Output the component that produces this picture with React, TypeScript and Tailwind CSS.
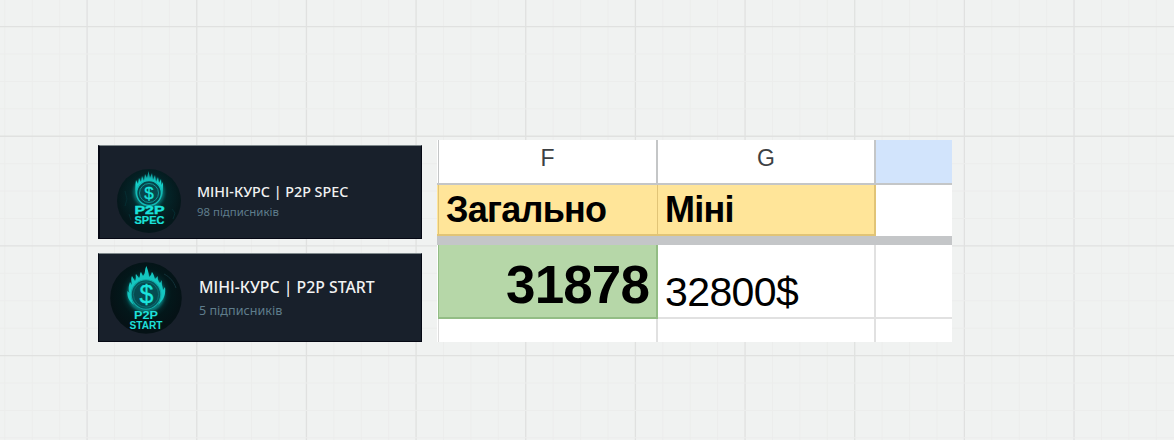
import React from "react";

const GRID_STEP = 109.66;

// faint canvas grid, every fourth line is stronger
function BoardGrid() {
  const columns = Array.from({ length: 45 }, (_, i) => i - 4);
  const rows = Array.from({ length: 18 }, (_, i) => i - 1);

  return (
    <svg className="absolute inset-0 h-full w-full" width="1174" height="440">
      {columns.map((i) => (
        <line
          key={`c${i}`}
          x1={87.1 + (i * GRID_STEP) / 4}
          x2={87.1 + (i * GRID_STEP) / 4}
          y1="0"
          y2="440"
          stroke={i % 4 === 0 ? "#e0e1e0" : "#ecedec"}
          strokeWidth={i % 4 === 0 ? 1.3 : 1}
        />
      ))}
      {rows.map((i) => (
        <line
          key={`r${i}`}
          x1="0"
          x2="1174"
          y1={26.6 + (i * GRID_STEP) / 4}
          y2={26.6 + (i * GRID_STEP) / 4}
          stroke={i % 4 === 0 ? "#e0e1e0" : "#ecedec"}
          strokeWidth={i % 4 === 0 ? 1.3 : 1}
        />
      ))}
    </svg>
  );
}

function SpecLogo() {
  return (
    <svg className="h-16 w-16 shrink-0" viewBox="0 0 64 64">
      <defs>
        <radialGradient id="specBg" cx="50%" cy="42%">
          <stop offset="0%" stopColor="#07595b" />
          <stop offset="55%" stopColor="#042529" />
          <stop offset="100%" stopColor="#05171b" />
        </radialGradient>
        <linearGradient id="specFire" x1="0" y1="0" x2="0" y2="1">
          <stop offset="0%" stopColor="#0b8284" />
          <stop offset="45%" stopColor="#16d6cf" />
          <stop offset="100%" stopColor="#0fa6a4" />
        </linearGradient>
        <filter id="specGlow" x="-30%" y="-30%" width="160%" height="160%">
          <feGaussianBlur stdDeviation="1.6" />
        </filter>
      </defs>
      <circle cx="32" cy="32" r="32" fill="url(#specBg)" />
      <path d="M8 22L10 30L8 37M55 40L58 44L56 50M12 45L14 51" fill="none" stroke="#062c31" strokeWidth="1" />
      <circle cx="32" cy="23" r="14" fill="none" stroke="#0fb5b0" strokeWidth="3" opacity="0.5" filter="url(#specGlow)" />
      <path
        d="M19 28C18 23 18 17 19 11L21 15L22 9L24 13L25 7L27 12L28 5L30 9L31.500 2L33 9L35 4L36 11L38 6L39 13L41 8L42 14L44 10L44.500 16L46 13C46 19 46 24 45 28C44 17 39 13 32 13C25 13 20 18 19 28Z"
        fill="url(#specFire)"
      />
      <circle cx="32" cy="24" r="12.400" fill="#054349" stroke="#13bcb7" strokeWidth="1.5" />
      <circle cx="32" cy="24" r="9.500" fill="#07474d" stroke="#109594" strokeWidth="1" />
      <text x="32" y="30" textAnchor="middle" fontFamily="Liberation Sans, sans-serif" fontSize="17" fill="#1be3dc" stroke="#1be3dc" strokeWidth="0.3">$</text>
      <text x="17.500" y="45" textLength="30" lengthAdjust="spacingAndGlyphs" fontFamily="Liberation Sans, sans-serif" fontWeight="700" fontSize="11.500" fill="#1be3dc" stroke="#1be3dc" strokeWidth="0.4">P2P</text>
      <text x="17.500" y="54.800" textLength="30" lengthAdjust="spacingAndGlyphs" fontFamily="Liberation Sans, sans-serif" fontWeight="700" fontSize="10.500" fill="#1be3dc" stroke="#1be3dc" strokeWidth="0.2">SPEC</text>
    </svg>
  );
}

function StartLogo() {
  return (
    <svg className="h-[72px] w-[72px] shrink-0" viewBox="0 0 72 72">
      <defs>
        <radialGradient id="startBg" cx="50%" cy="44%">
          <stop offset="0%" stopColor="#087477" />
          <stop offset="45%" stopColor="#043235" />
          <stop offset="70%" stopColor="#03171a" />
          <stop offset="100%" stopColor="#051216" />
        </radialGradient>
        <filter id="startGlow" x="-30%" y="-30%" width="160%" height="160%">
          <feGaussianBlur stdDeviation="1.8" />
        </filter>
      </defs>
      <circle cx="36" cy="36" r="35.800" fill="url(#startBg)" />
      <path d="M54 12C60 15 64 20 66 26" fill="none" stroke="#123138" strokeWidth="1" />
      <circle cx="36" cy="32" r="16.500" fill="none" stroke="#11bab5" strokeWidth="4" opacity="0.6" filter="url(#startGlow)" />
      <path
        d="M24 43C18 38 17 34 17.500 29L19.500 31C18 26 19 23 20 20L22 23C21 18 21 16 22 14L25 19C27 16 25 14 26 12L29 16C31 14 29 12 31 10L33 14C36 11 34 8 36.500 4C38 9 39 11 39 15C42 13 41 11 42 10C44 12 44 15 45 17L48 14C47 17 49 20 50 21L52 18C51 22 53 25 53 28L55 25C56 32 54 38 48 43C54 31 49 18 36 18C23 18 18 31 24 43Z"
        fill="#14c6c0"
      />
      <circle cx="36" cy="32.500" r="14.800" fill="#06565b" stroke="#12aaa7" strokeWidth="1.1" />
      <circle cx="36" cy="32.500" r="12.600" fill="#064b51" stroke="#0c7678" strokeWidth="0.8" />
      <text x="36.500" y="40.700" textAnchor="middle" fontFamily="Liberation Sans, sans-serif" fontSize="25" fill="#1be3dc" stroke="#1be3dc" strokeWidth="0.3">$</text>
      <text x="24" y="57.300" textLength="24" lengthAdjust="spacingAndGlyphs" fontFamily="Liberation Sans, sans-serif" fontWeight="700" fontSize="11.500" fill="#1fe0da">P2P</text>
      <text x="19.500" y="66.600" textLength="33" lengthAdjust="spacingAndGlyphs" fontFamily="Liberation Sans, sans-serif" fontWeight="700" fontSize="10" fill="#1fe0da">START</text>
    </svg>
  );
}

function Sheet() {
  return (
    <div className="grid h-[202px] w-[515px] grid-cols-[2px_219px_218px_76px] grid-rows-[45px_51px_9px_74px_23px] bg-white font-['Liberation_Sans',Arial,sans-serif] text-black">
      <div className="border-b-2 border-r border-[#c4c6c7]" />
      <div className="flex justify-center border-b-2 border-r-2 border-[#c4c6c7] pt-[5px] text-[23px] leading-[26px] text-[#3c4043]">F</div>
      <div className="flex justify-center border-b-2 border-r-2 border-[#c4c6c7] pt-[5px] text-[23px] leading-[26px] text-[#3c4043]">G</div>
      <div className="border-b-2 border-[#c4c6c7] bg-[#d2e4fc]" />

      <div className="border-b-2 border-r border-[#e1c477] bg-[#ffe599]" />
      <div className="border-b-2 border-r border-[#e1c477] bg-[#ffe599] pl-[7px] text-[36px] font-bold leading-[49px] tracking-[-0.75px]">Загально</div>
      <div className="border-b-2 border-r-2 border-[#e1c477] bg-[#ffe599] pl-[7px] text-[36px] font-bold leading-[49px] tracking-[-0.75px]">Міні</div>
      <div />

      <div className="col-span-4 bg-[#c4c6c8]" />

      <div className="border-r border-[#93bd85]" />
      <div className="flex items-center justify-end border-b-2 border-r-2 border-[#93bd85] bg-[#b6d7a8] pr-[7px] pt-[6px] text-[53px] font-bold leading-none tracking-[-0.9px]">31878</div>
      <div className="border-b-2 border-r-2 border-[#e1e1e1] pl-[7px] pt-[24px] text-[41px] leading-[46px] tracking-[-0.6px]">32800$</div>
      <div className="border-b-2 border-[#e1e1e1]" />

      <div className="border-r border-[#dcdcdc]" />
      <div className="border-r-2 border-[#e1e1e1]" />
      <div className="border-r-2 border-[#e1e1e1]" />
      <div />
    </div>
  );
}

export default function App() {
  return (
    <div className="relative h-[440px] w-[1174px] overflow-hidden bg-[#f0f2f1]">
      <BoardGrid />
      <div className="relative flex items-end gap-[15px] pl-[98px] pt-[140px]">
        <div className="flex w-[324px] flex-col gap-[14px] font-['Noto_Sans',sans-serif]">
          <div className="flex h-[94px] border border-l-2 border-[#050814] border-t-[#7f898c] bg-[#18202b] pl-[17px] pt-[23px]">
            <SpecLogo />
            <div className="ml-4 pt-[13px]">
              <div className="whitespace-nowrap text-[14.3px] font-medium leading-5 text-[#f1f2f2]">МІНІ-КУРС | P2P SPEC</div>
              <div className="whitespace-nowrap text-[11.4px] leading-[20px] text-[#5f7d8c]">98 підписників</div>
            </div>
          </div>
          <div className="flex h-[89px] border border-[#050814] border-t-[#7f898c] bg-[#18202b] pl-[11px] pt-[8px]">
            <StartLogo />
            <div className="ml-[17px] pt-[13px]">
              <div className="whitespace-nowrap text-[15.8px] font-medium leading-6 text-[#f1f2f2]">МІНІ-КУРС | P2P START</div>
              <div className="whitespace-nowrap text-[12.6px] leading-[24px] text-[#5f7d8c]">5 підписників</div>
            </div>
          </div>
        </div>
        <Sheet />
      </div>
    </div>
  );
}
